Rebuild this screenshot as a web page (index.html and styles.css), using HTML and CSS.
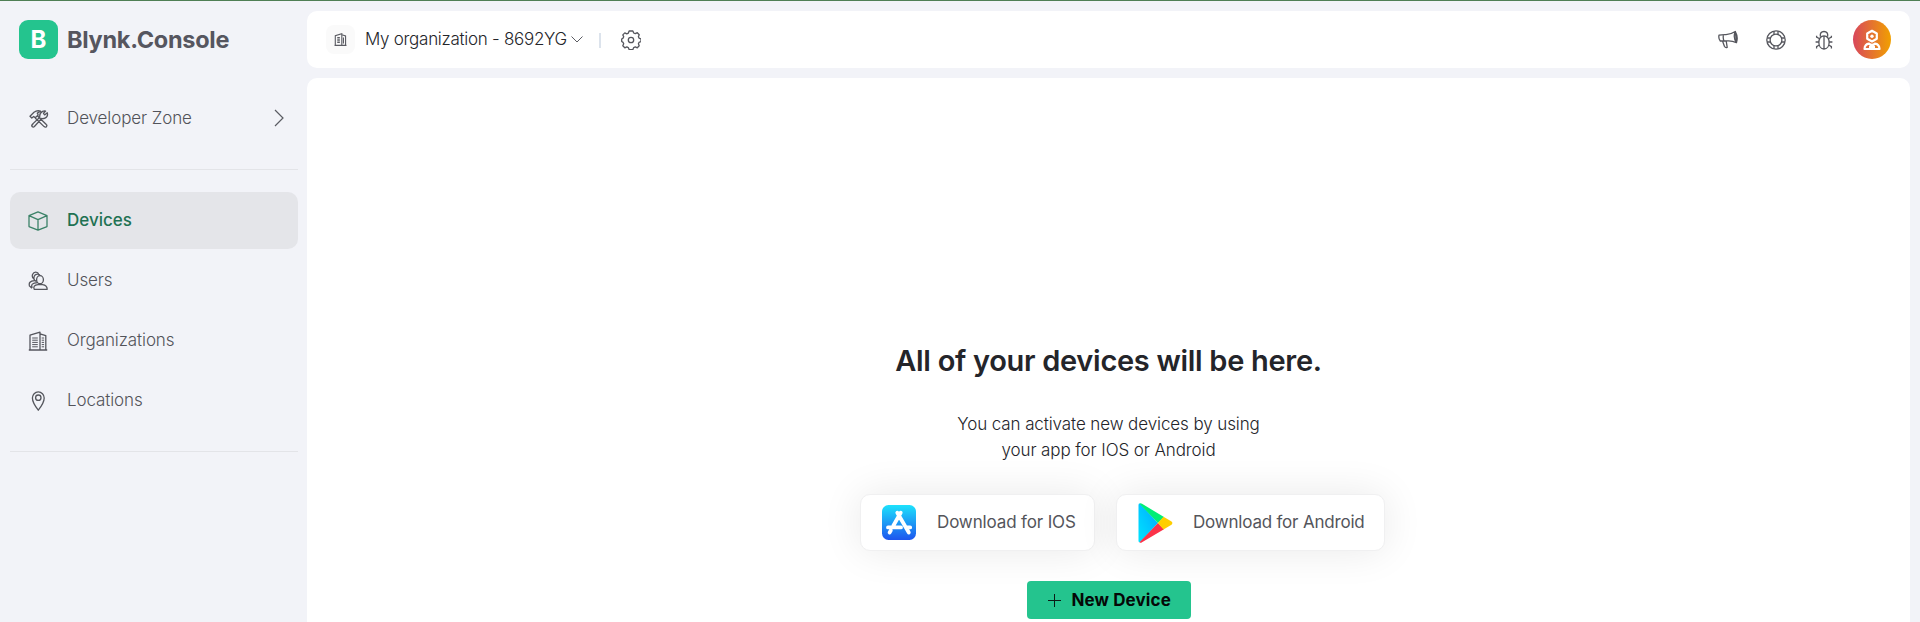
FILE: index.html
```html
<!DOCTYPE html>
<html lang="en">
<head>
<meta charset="utf-8">
<title>Blynk.Console</title>
<link rel="stylesheet" href="styles.css">
</head>
<body>
<div class="app">
  <aside class="sidebar">
    <div class="brand"><span class="brand-mark">B</span><span class="brand-name">Blynk.Console</span></div>
    <a class="nav-item dev-zone">
      <svg class="icon" viewBox="0 0 20 20"><path d="m1 7.200 4-4Q8.200 1 11.500 2.200L8.300 4.100 9.200 6 6.200 8.800 4.700 7.400 2.800 9ZM6.400 9.200l8.700 8.400q1.300 1.100 2.300.1 1-1.200-.1-2.200L8.600 7M3 15.600l7.800-7.400q-.7-4 2.800-5.800 1.600-.7 3-.3L14.500 4.300l1.100 1.600 2.700-2.100q1 3.900-2.300 5.300-1.600.7-3.300.4l-7.300 8q-1.200 1.200-2.300 0-1-1 .6-1.900Z"/></svg>
      <span class="nav-label">Developer Zone</span>
      <svg class="chevron-right" viewBox="0 0 10 18"><path d="m1 1 8 8-8 8"/></svg>
    </a>
    <div class="divider"></div>
    <nav class="nav">
      <a class="nav-item active">
        <svg class="icon" viewBox="0 0 20 20"><path d="m10 .9 9 3.700v11L10 19.200 1 15.600v-11ZM1 4.600l9 4 9-4M10 8.600v10.600"/></svg>
        <span class="nav-label">Devices</span>
      </a>
      <a class="nav-item">
        <svg class="icon" viewBox="0 0 20 20"><path d="M6.200 18.300Q4.500 14.300 10 13.700h4.500q4.700.6 4.700 4.600Z"/><ellipse cx="12" cy="8.700" rx="3.400" ry="4"/><path d="M8.500 10.400Q5.500 9.500 5.900 6.600 6.500 3 10 3.200q1.500.3 2 1.400M6 8Q3.600 6.500 4.500 3.600 6 .3 9.200 1.500q1 .5 1.300 1.600M4.300 16.700Q1.800 12 9.500 11.700M1.500 14.800Q0 10.200 6.500 9.600M4 17.200 1 14.600"/></svg>
        <span class="nav-label">Users</span>
      </a>
      <a class="nav-item">
        <svg class="icon" viewBox="0 0 20 20"><path d="M.8 19h18.400M2 19V4.200l10-3.100V19M12 2.800l5.800 1.800V19"/><path class="windows" d="M4.200 7h5.600M4.200 9.200h5.600M4.200 11.400h5.600M4.200 13.600h5.600M4.200 15.800h5.600M13.700 7h2.400M13.700 9.200h2.400M13.700 11.400h2.400M13.700 13.600h2.400M13.700 15.800h2.400"/></svg>
        <span class="nav-label">Organizations</span>
      </a>
      <a class="nav-item">
        <svg class="icon" viewBox="0 0 20 20"><path d="M10.300 19.200Q4.400 11.700 4.400 7a5.900 6.100 0 0 1 11.800 0q0 4.700-5.900 12.200Z"/><circle cx="10.300" cy="6.700" r="2.700"/></svg>
        <span class="nav-label">Locations</span>
      </a>
    </nav>
    <div class="divider"></div>
  </aside>
  <div class="main">
    <header class="topbar">
      <span class="org-badge"><svg viewBox="0 0 20 20"><path d="M.8 19h18.400M2 19V4.200l10-3.100V19M12 2.800l5.800 1.800V19"/><path d="M5 7h4M5 9.500h4M5 12h4M5 14.500h4M14.500 7v9"/></svg></span>
      <span class="org-name">My organization - 8692YG</span>
      <svg class="chevron-down" viewBox="0 0 12 7"><path d="m.5.5 5.500 5.500L11.500.5"/></svg>
      <span class="separator"></span>
      <svg class="icon gear" viewBox="0 0 20 20"><path d="M8.100 1 11.900 1l.8 2 1.600.6 2-.9 1.900 2-.8 2 .6 1.400 2 .9v2.500l-2 .9-.6 1.400.8 2-1.900 2-2-.9-1.600.7-.8 2H8.100l-.8-2-1.500-.7-2 .9-2-2 .9-2-.6-1.400-1.400-.9V9l1.400-.9.6-1.400-.9-1.800 2-2 2 .9 1.500-.6Z"/><circle cx="10" cy="10" r="2.700"/></svg>
      <div class="actions">
        <svg class="icon" viewBox="0 0 20 20"><path d="M1 5.200Q4 4.600 8 4.700 13 4.300 17.300 1.500l1.200 11.100q-5-2.300-10-1.700L2.300 11Q.3 8.600 1 5.200ZM5.500 4.900q-.8 3 .5 6M17.300 1.500q-2.600 6 1.200 11.100 1.900-5.600-1.200-11.100M4.500 11l2 5.500q1 1.600 2.700.9L8.200 11"/></svg>
        <svg class="icon" viewBox="0 0 20 20"><circle cx="10" cy="10" r="9.200"/><circle cx="10" cy="10" r="5.900"/><path d="M8 1.200v3.400M12 1.200v3.400M8 15.400v3.400M12 15.400v3.400M1.200 8h3.400M1.200 12h3.400M15.400 8h3.400M15.400 12h3.400"/></svg>
        <svg class="icon" viewBox="0 0 20 20"><path d="M10 5.800c7 0 6.700 13.200 0 13.200S3 5.800 10 5.800ZM10 5.800V19M6.300 6.500Q5.800 1.500 10 1.500t3.700 5M5.200 8.500 2.600 7.200V5.800M14.800 8.500l2.600-1.300V5.800M4.700 12H1.600M15.300 12h3.100M5.300 15l-2.700 1.600v1.800M14.700 15l2.700 1.600v1.800"/></svg>
        <span class="avatar"><svg viewBox="0 0 18 22"><path d="m9 1.800 4.800 2.700v5.300L9 12.500 4.200 9.800V4.500Z"/><path d="M1.500 20Q1.800 15.200 6 14.700q3 2.600 6 0 4.200.5 4.500 5.300ZM6 17.800h6"/><circle class="lens" cx="9" cy="7.200" r="1.700"/></svg></span>
      </div>
    </header>
    <main class="content">
      <h1 class="title">All of your devices will be here.</h1>
      <p class="hint">You can activate new devices by using<br>your app for IOS or Android</p>
      <div class="downloads">
        <a class="download ios">
          <svg class="appstore" viewBox="0 0 34 35"><defs><linearGradient id="sky" x2="0" y2="1"><stop stop-color="#1de2fc"/><stop offset="1" stop-color="#1d55ee"/></linearGradient></defs><rect width="34" height="35" rx="6.500" fill="url(#sky)"/><path class="letter-a" d="M18.700 7.700 11.300 20.800M15.300 7.700l11.500 19.800M6 22.400h13M24 22.400h4.200M8.800 25.500l-1.200 2"/></svg>
          <span>Download for IOS</span>
        </a>
        <a class="download android">
          <svg class="play" viewBox="0 0 35 40"><defs><linearGradient id="blade" x1="1" x2="0" y2="1"><stop stop-color="#00a8ff"/><stop offset="1" stop-color="#00e4ff"/></linearGradient></defs><path fill="url(#blade)" d="M.5 2Q.5.500 2 .6l18 19.500L2 39.300Q.5 39.500.5 38Z"/><path fill="#00ee76" d="M1.500.8Q2.500-.2 4 .8L26 14l-6 6.100Z"/><path fill="#fb3349" d="M1.500 39.200q1 1 2.500 0L26 26.200l-6-6.100Z"/><path fill="#ffce00" d="m25.500 13.700 8 4.800q1.800 1.600 0 3.200l-8 4.800-5.700-6.400Z"/></svg>
          <span>Download for Android</span>
        </a>
      </div>
      <button class="new-device"><svg class="plus" viewBox="0 0 13 13"><path d="M6.500 0v13M0 6.500h13"/></svg><span>New Device</span></button>
    </main>
  </div>
</div>
</body>
</html>
```
FILE: styles.css
```css
* { box-sizing: border-box; }
body { margin: 0; height: 622px; overflow: hidden; background: #f2f3f8; font-family: Inter, "Liberation Sans", sans-serif; font-size: 17px; font-weight: 300; letter-spacing: -.1px; color: #24252a; }
svg { display: block; fill: none; flex: none; }
.app { display: flex; height: 622px; border-top: 1px solid #4f7f55; }
.sidebar { width: 307px; padding: 19px 9px 0 10px; flex: none; }
.brand { display: flex; align-items: center; height: 39px; padding-left: 9px; }
.brand-mark { width: 39px; height: 39px; border-radius: 9px; background: #24c48e; color: #fff; font-weight: 700; font-size: 24px; line-height: 40px; text-align: center; }
.brand-name { margin-left: 9px; font-size: 23.500px; font-weight: 700; color: #56565f; letter-spacing: -.28px; white-space: nowrap; }
.nav-item { display: flex; align-items: center; width: 288px; height: 57px; padding: 0 14px 0 18px; border-radius: 10px; color: #52535a; }
.icon { width: 20px; height: 20px; stroke: #55565d; stroke-width: 1.300; stroke-linejoin: round; }
.windows { stroke-width: 1; }
.nav-label { margin-left: 19px; padding-bottom: 2px; white-space: nowrap; }
.dev-zone { margin-top: 31px; }
.dev-zone .icon { margin-left: 1px; margin-right: -1px; }
.chevron-right { width: 10px; height: 18px; margin-left: auto; margin-bottom: 2px; stroke: #5b5c63; stroke-width: 1.200; }
.divider { width: 288px; height: 1px; background: #e3e4e8; }
.dev-zone + .divider { margin-top: 22px; }
.nav { display: grid; gap: 3px; margin: 22px 0; }
.active { background: #e4e5e9; color: #1f7253; font-weight: 500; letter-spacing: 0; }
.active .icon { stroke: #3b8268; }
.main { flex: 1; display: flex; flex-direction: column; gap: 10px; padding: 10px 10px 0 0; }
.topbar { display: flex; align-items: center; height: 57px; flex: none; padding: 0 19px; background: #fff; border-radius: 10px; }
.org-badge { display: grid; place-items: center; width: 29px; height: 29px; border-radius: 8px; background: #fafafa; }
.org-badge svg { width: 13px; height: 13px; stroke: #5b5c63; stroke-width: 1.700; }
.org-name { margin-left: 10px; width: 202px; padding-bottom: 2px; letter-spacing: -.28px; white-space: nowrap; }
.chevron-down { width: 12px; height: 7px; margin-left: 4px; stroke: #5b5c63; }
.separator { width: 2px; height: 15px; margin: 2px 20px 0 16px; background: #dce3ec; }
.actions { display: flex; align-items: center; gap: 28px; margin-left: auto; }
.avatar { display: grid; place-items: center; width: 38px; height: 39px; border-radius: 50%; background: linear-gradient(90deg, #d8475c, #f1a000); margin-left: -9px; }
.avatar svg { width: 18px; height: 22px; stroke: #fff; stroke-width: 2.200; stroke-linejoin: round; }
.avatar .lens { fill: #fff; stroke: none; }
.content { flex: 1; display: flex; flex-direction: column; align-items: center; padding-top: 265px; background: #fff; border-radius: 10px 10px 0 0; }
.title { margin: 0; height: 36px; line-height: 36px; font-size: 29px; font-weight: 600; letter-spacing: -.3px; white-space: nowrap; }
.hint { margin: 32px 0 0; line-height: 26px; text-align: center; white-space: nowrap; }
.downloads { display: flex; gap: 21px; margin: 31px 0 0 28px; }
.download { display: flex; align-items: center; height: 57px; padding-left: 21px; border: 1px solid #f0f0f1; border-radius: 10px; background: #fff; color: #54555b; font-weight: 400; letter-spacing: -.2px; box-shadow: 0 0 40px rgba(0,0,0,.09); white-space: nowrap; }
.ios { width: 235px; letter-spacing: -.14px; }
.android { width: 269px; }
.download span { margin-left: 21px; padding-bottom: 1px; }
.android span { margin-left: 20px; }
.appstore { width: 34px; height: 35px; }
.letter-a { stroke: #fff; stroke-width: 3.800; stroke-linecap: round; }
.play { width: 35px; height: 40px; }
.new-device { display: flex; align-items: center; width: 164px; height: 38px; margin: 30px 0 0; padding: 0 0 0 21px; border: 0; border-radius: 4px; background: #24c48e; color: #050807; font: 700 17px Inter, "Liberation Sans", sans-serif; letter-spacing: .1px; white-space: nowrap; }
.plus { width: 13px; height: 13px; margin-right: 11px; stroke: #0b1c16; }
```
